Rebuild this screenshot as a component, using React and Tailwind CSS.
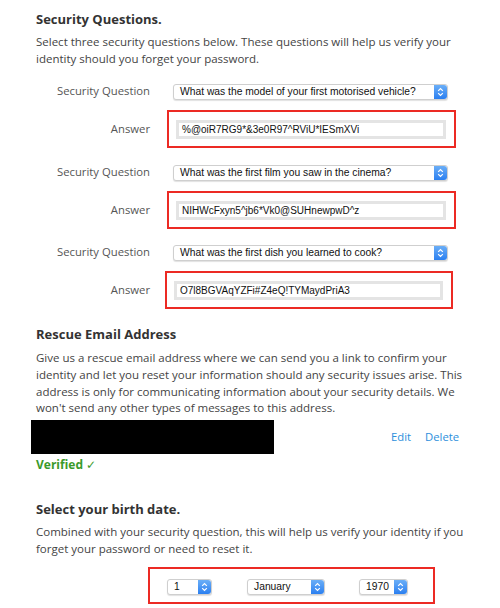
import React from 'react';

const bodyFont = { fontFamily: '"Open Sans", "DejaVu Sans", sans-serif' };

const Stepper = () => (
    <div className="w-[13px] self-stretch rounded-r-[3px] bg-gradient-to-b from-[#6aaef7] to-[#2a7ff0] flex items-center justify-center">
        <svg width="7" height="10" viewBox="0 0 7 10" fill="none" stroke="white" strokeWidth="1.2">
            <path d="M1.2 3.8 L3.5 1.5 L5.8 3.8" />
            <path d="M1.2 6.2 L3.5 8.5 L5.8 6.2" />
        </svg>
    </div>
);

const Select = ({ value, width }) => (
    <div
        className={`${width} h-[16px] flex items-stretch bg-white border border-[#cfcfcf] rounded-[3px] shadow-[0_1px_1px_rgba(0,0,0,0.12)]`}
    >
        <div className="flex-1 pl-[6px] flex items-center text-[10.3px] text-[#111] font-['Liberation_Sans',Arial,sans-serif] whitespace-nowrap overflow-hidden">
            {value}
        </div>
        <Stepper />
    </div>
);

const QuestionBlock = ({ question, answer, boxLeft = 'ml-[17px]', boxWidth = 'w-[289px]' }) => (
    <div className="flex flex-col">
        <div className="flex items-center">
            <div className="w-[114px] text-right text-[11.3px] text-[#555]">Security Question</div>
            <div className="ml-[23px]">
                <Select value={question} width="w-[275px]" />
            </div>
        </div>
        <div className="flex items-center mt-[10px]">
            <div className="w-[114px] text-right text-[11.3px] text-[#555]">Answer</div>
            <div className={`${boxLeft} ${boxWidth} h-[38px] border-2 border-[#ec2a24] pl-[7px] pr-[8px] flex items-center`}>
                <div className="w-full h-[19px] border-[3px] border-[#e4e4e4] bg-white flex items-center pl-[3px] text-[10px] text-[#111] font-['Liberation_Sans',Arial,sans-serif] whitespace-nowrap">
                    {answer}
                </div>
            </div>
        </div>
    </div>
);

export default function App() {
    return (
        <div className="w-[500px] h-[608px] overflow-hidden bg-white pl-[36px] pt-[10px] text-[#444]" style={bodyFont}>
            {/* Security questions */}
            <h2 className="text-[13px] leading-[18px] font-bold text-[#333]">Security Questions.</h2>
            <p className="mt-[6px] text-[11.5px] leading-[16.7px] w-[430px]">
                Select three security questions below. These questions will help us verify your identity should you forget your password.
            </p>

            <div className="mt-[16px]">
                <QuestionBlock
                    question="What was the model of your first motorised vehicle?"
                    answer="%@oiR7RG9*&3e0R97^RViU*IESmXVi"
                />
            </div>
            <div className="mt-[16px]">
                <QuestionBlock
                    question="What was the first film you saw in the cinema?"
                    answer="NIHWcFxyn5^jb6*Vk0@SUHnewpwD^z"
                />
            </div>
            <div className="mt-[15px]">
                <QuestionBlock
                    question="What was the first dish you learned to cook?"
                    answer="O7l8BGVAqYZFi#Z4eQ!TYMaydPriA3"
                    boxLeft="ml-[15px]"
                    boxWidth="w-[288px]"
                />
            </div>

            {/* Rescue email */}
            <h2 className="mt-[16px] text-[13px] leading-[18px] font-bold text-[#333]">Rescue Email Address</h2>
            <p className="mt-[7px] text-[11.5px] leading-[16.7px] w-[432px]">
                Give us a rescue email address where we can send you a link to confirm your identity and let you reset your information should any security issues arise. This address is only for communicating information about your security details. We won't send any other types of messages to this address.
            </p>
            <div className="mt-[3px] flex items-center">
                <div className="-ml-[5px] w-[243px] h-[34px] bg-black" />
                <div className="ml-[117px] flex gap-[14px] text-[11.3px] text-[#2d8fdc]">
                    <span>Edit</span>
                    <span>Delete</span>
                </div>
            </div>
            <div className="mt-[3px] text-[12px] leading-[16px] font-bold text-[#3a9a2a]">Verified ✓</div>

            {/* Birth date */}
            <h2 className="mt-[27px] text-[13px] leading-[18px] font-bold text-[#333]">Select your birth date.</h2>
            <p className="mt-[6px] text-[11.5px] leading-[16.7px] w-[432px]">
                Combined with your security question, this will help us verify your identity if you forget your password or need to reset it.
            </p>
            <div className="mt-[10px] ml-[112px] w-[287px] h-[37px] border-2 border-[#ec2a24] pl-[17px] pt-[2px] flex items-center">
                <Select value="1" width="w-[45px]" />
                <div className="ml-[35px]">
                    <Select value="January" width="w-[78px]" />
                </div>
                <div className="ml-[34px]">
                    <Select value="1970" width="w-[49px]" />
                </div>
            </div>
        </div>
    );
}
